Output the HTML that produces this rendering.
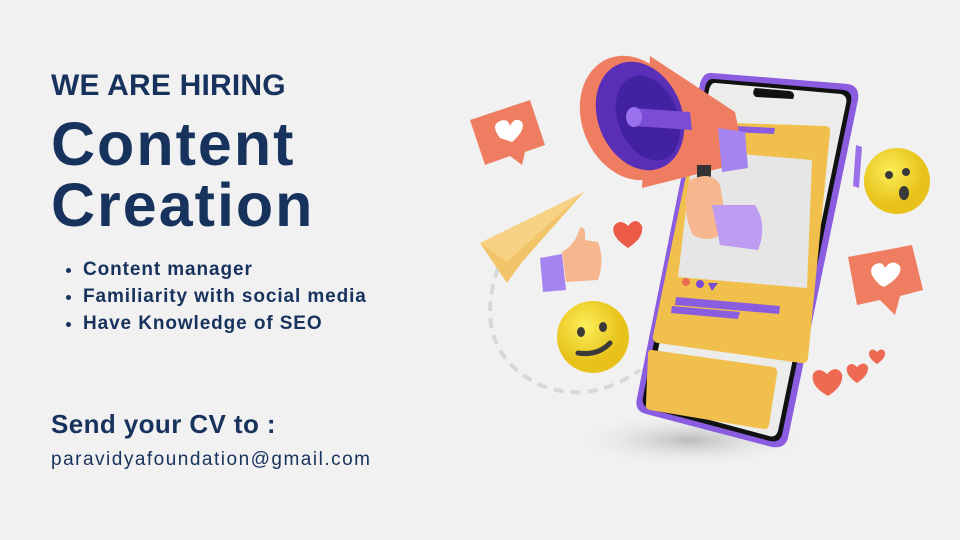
<!DOCTYPE html>
<html><head><meta charset="utf-8"><style>
html,body{margin:0;padding:0}
body{width:960px;height:540px;background:#f1f1f1;position:relative;overflow:hidden;font-family:"Liberation Sans",sans-serif;color:#17325c}
.t{position:absolute;left:51px;white-space:nowrap;font-weight:bold}
#h1{top:69px;font-size:30px;letter-spacing:0.2px}
.big{font-size:61px;letter-spacing:2px;line-height:61px}
#c1{top:114px}#c2{top:175px}
ul{position:absolute;left:66px;top:256px;margin:0;padding:0 0 0 17px;font-size:19px;font-weight:bold;line-height:27px;letter-spacing:0.9px}
#cv{top:409px;font-size:26px;letter-spacing:0.4px}
#em{top:449px;font-size:19px;font-weight:normal;letter-spacing:1.5px}
svg{position:absolute;left:0;top:0}
</style></head><body>
<div class="t" id="h1">WE ARE HIRING</div>
<div class="t big" id="c1">Content</div>
<div class="t big" id="c2">Creation</div>
<ul><li>Content manager</li><li>Familiarity with social media</li><li>Have Knowledge of SEO</li></ul>
<div class="t" id="cv">Send your CV to :</div>
<div class="t" id="em">paravidyafoundation@gmail.com</div>
<svg width="960" height="540" viewBox="0 0 960 540">
<defs><radialGradient id="sh"><stop offset="0" stop-color="#bbb"/><stop offset="1" stop-color="#f1f1f1" stop-opacity="0"/></radialGradient>
<radialGradient id="em1" cx="0.4" cy="0.35"><stop offset="0" stop-color="#fbef5a"/><stop offset="1" stop-color="#e8c21a"/></radialGradient></defs>
<ellipse cx="690" cy="440" rx="120" ry="28" fill="url(#sh)"/>
<path d="M498 268 Q470 350 540 385 Q590 405 640 370" fill="none" stroke="#d8d8d8" stroke-width="4" stroke-dasharray="10 7"/>
<!-- phone -->
<path d="M712 73 L848 84 Q860 86 858 100 L788 438 Q785 449 772 447 L646 414 Q634 411 637 398 L700 84 Q703 72 712 73Z" fill="#8a5ce0"/>
<path d="M714 79 L844 90 Q853 92 851 102 L782 435 Q779 443 770 441 L650 409 Q641 406 643 397 L705 88 Q707 78 714 79Z" fill="#111"/>
<path d="M716 83 L841 94 Q848 96 846 104 L778 431 Q776 438 769 436 L654 405 Q647 403 649 396 L709 90 Q711 82 716 83Z" fill="#ececea"/>
<path d="M755 88 L790 91 Q796 93 793 99 L756 97 Q751 94 755 88Z" fill="#111"/>
<path d="M702 122 L826 126 Q831 127 830 132 L808 358 Q807 364 801 363 L658 343 Q652 342 653 336 L696 127 Q697 121 702 122Z" fill="#f0bf4c"/>
<path d="M693 150 L812 160 L807 288 L678 277Z" fill="#e6e6e6"/>
<path d="M734 126 L775 128 L774 134 L733 132Z" fill="#8a5ce0"/>
<path d="M676 297 L780 306 L779 314 L675 305Z" fill="#8a5ce0" />
<path d="M672 306 L740 312 L738 319 L671 313Z" fill="#8a5ce0"/>
<circle cx="686" cy="282" r="4" fill="#ef6a52"/><circle cx="700" cy="284" r="4" fill="#7a4bd1"/><path d="M708 283 L718 283 L712 291Z" fill="#7a4bd1"/>
<path d="M652 350 L773 367 Q778 368 777 374 L769 425 Q768 430 763 429 L650 410 Q645 409 646 404 L648 355 Q648 349 652 350Z" fill="#f0bf4c"/>
<path d="M856 145 L862 147 L859 188 L853 186Z" fill="#9a70ea"/>
<!-- megaphone -->
<path d="M650 56 L735 112 L745 162 L642 188Z" fill="#ef7d61"/>
<ellipse cx="632" cy="118" rx="50" ry="64" transform="rotate(-22 632 118)" fill="#ef7d61"/>
<ellipse cx="640" cy="116" rx="42" ry="56" transform="rotate(-22 640 116)" fill="#5a2fb8"/>
<ellipse cx="648" cy="118" rx="30" ry="44" transform="rotate(-22 648 118)" fill="#4222a0"/>
<path d="M632 108 L690 112 L692 130 L634 126Z" fill="#7b4cd6"/>
<ellipse cx="634" cy="117" rx="8" ry="10" fill="#9b72ee"/>
<path d="M718 128 L745 132 L748 168 L722 172Z" fill="#a684ef"/>
<rect x="697" y="165" width="14" height="22" fill="#333"/>
<path d="M690 180 Q712 170 720 185 L728 230 Q710 245 693 235 Q680 210 690 180Z" fill="#f6b78f"/>
<path d="M712 205 L755 205 Q768 225 758 250 L720 245Z" fill="#bd9cf2"/>
<!-- left bubble -->
<path d="M470 120 L530 100 L545 145 L525 152 L522 165 L510 156 L485 165Z" fill="#ef7d61"/>
<path d="M500 138 Q490 125 500 121 Q508 118 510 126 Q515 116 522 122 Q526 130 512 142Z" fill="#fff"/>
<!-- right bubble -->
<path d="M848 257 L912 245 L923 290 L900 296 L895 315 L880 300 L857 305Z" fill="#ef7d61"/>
<path d="M880 285 Q866 272 874 265 Q882 260 885 268 Q892 258 900 266 Q903 276 884 287Z" fill="#fff"/>
<!-- surprised emoji -->
<circle cx="897" cy="181" r="33" fill="url(#em1)"/>
<circle cx="889" cy="175" r="4" fill="#3a3a3a"/><circle cx="906" cy="172" r="4" fill="#3a3a3a"/>
<ellipse cx="904" cy="193" rx="5" ry="7" fill="#3a3a3a"/>
<!-- smile emoji -->
<circle cx="593" cy="337" r="36" fill="url(#em1)"/>
<ellipse cx="581" cy="332" rx="4" ry="5" fill="#3a3a3a"/><ellipse cx="603" cy="327" rx="4" ry="5" fill="#3a3a3a"/>
<path d="M578 353 Q598 356 610 343" stroke="#3a3a3a" stroke-width="5" fill="none" stroke-linecap="round"/>
<!-- plane -->
<path d="M480 243 L584 192 L522 262 L507 283Z" fill="#f2c46a"/>
<path d="M480 243 L584 192 L507 262Z" fill="#f7d184"/>
<!-- thumb -->
<path d="M540 258 L562 254 L566 290 L543 292Z" fill="#a684ef"/>
<path d="M562 252 Q575 245 580 228 Q586 225 585 240 L598 242 Q605 260 598 280 L566 282Z" fill="#f6b78f"/>
<!-- hearts -->
<path d="M628 248 Q610 236 614 226 Q620 218 628 226 Q636 216 642 226 Q644 238 628 248Z" fill="#ec5a48"/>
<path d="M828 396 Q810 386 813 374 Q818 366 827 374 Q836 364 842 374 Q844 386 828 396Z" fill="#ef6a52"/>
<path d="M857 383 Q845 375 847 367 Q851 361 857 367 Q864 360 868 367 Q869 375 857 383Z" fill="#ef6a52"/>
<path d="M877 364 Q868 358 869 352 Q872 347 877 352 Q882 347 885 352 Q886 358 877 364Z" fill="#ef6a52"/>
</svg>
</body></html>
